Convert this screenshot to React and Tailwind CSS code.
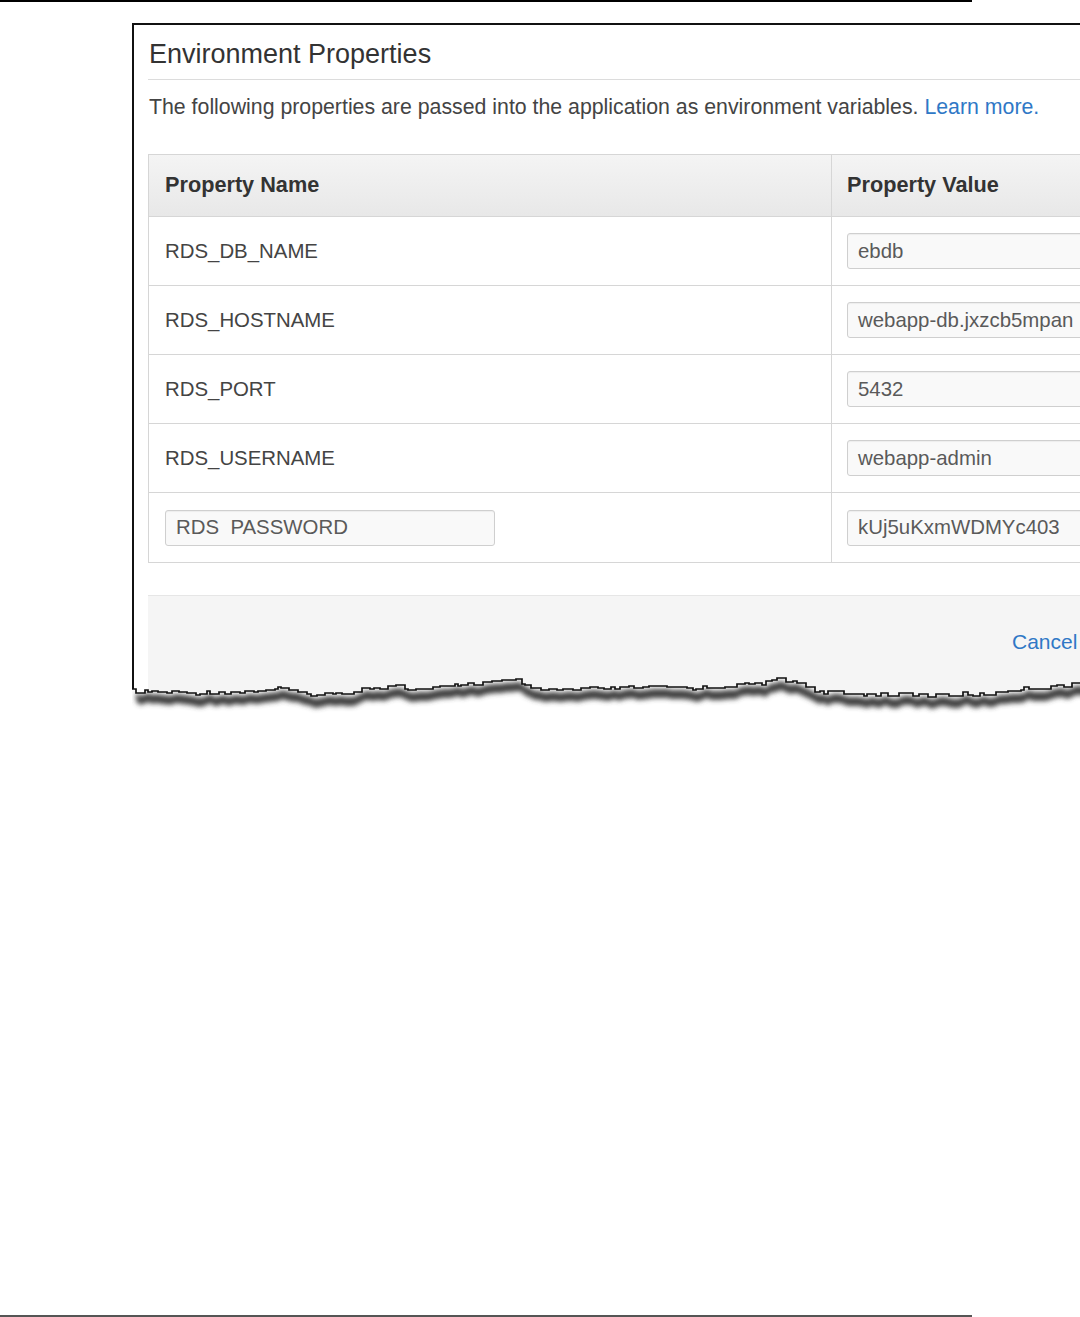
import React from "react";

const rows = [
  { name: "RDS_DB_NAME", value: "ebdb" },
  { name: "RDS_HOSTNAME", value: "webapp-db.jxzcb5mpan" },
  { name: "RDS_PORT", value: "5432" },
  { name: "RDS_USERNAME", value: "webapp-admin" },
  { name: "RDS_PASSWORD", value: "kUj5uKxmWDMYc403", editable: true },
];

// rough outline of the torn bottom edge, page coordinates
const anchors = [
  [132, 689], [180, 691], [240, 690], [285, 686], [300, 692], [345, 692], [360, 686],
  [400, 684], [410, 688], [440, 686], [465, 682], [490, 680], [520, 679], [528, 688],
  [560, 688], [600, 687], [640, 685], [700, 686], [740, 683], [770, 680], [777, 676],
  [800, 681], [822, 691], [860, 692], [920, 693], [990, 692], [1010, 688], [1050, 684],
  [1095, 681],
];

function baseY(x) {
  for (let i = 0; i < anchors.length - 1; i++) {
    const [x0, y0] = anchors[i];
    const [x1, y1] = anchors[i + 1];
    if (x >= x0 && x <= x1) return y0 + ((y1 - y0) * (x - x0)) / (x1 - x0);
  }
  return anchors[anchors.length - 1][1];
}

function hash(n) {
  const s = Math.sin(n * 12.9898) * 43758.5453;
  return s - Math.floor(s);
}

const OX = 132;
const OY = 660;

function tornPoints() {
  const pts = [];
  let x = 132;
  let i = 0;
  while (x <= 1095) {
    const y = Math.round(baseY(x) + (hash(i) - 0.5) * 4);
    pts.push([x - OX, y - OY]);
    x += 3 + Math.floor(hash(i + 100) * 7);
    i++;
  }
  return pts;
}

const pts = tornPoints();
const edge = pts
  .map(([x, y], i) => (i === 0 ? `M${x} ${y}` : `H${x} V${y}`))
  .join(" ");
const below = `${edge} H970 V70 H0 Z`;
const shadowTop = pts.map(([x, y], i) => `${i === 0 ? "M" : "L"}${x + 4} ${y + 3}`).join(" ");
const shadowBottom = pts
  .slice()
  .reverse()
  .map(([x, y]) => `L${x + 4} ${y + 12}`)
  .join(" ");
const shadow = `${shadowTop} ${shadowBottom} Z`;

function TornEdge() {
  return (
    <svg
      className="absolute left-[-2px] top-[637px]"
      width="970"
      height="70"
      viewBox="0 0 970 70"
    >
      <defs>
        <clipPath id="below">
          <path d={below} />
        </clipPath>
        <filter id="blur" x="-5%" y="-50%" width="110%" height="200%">
          <feGaussianBlur stdDeviation="2.4" />
        </filter>
      </defs>
      <path d={below} fill="#ffffff" />
      <g clipPath="url(#below)">
        <path d={shadow} fill="#3f3f3f" filter="url(#blur)" />
      </g>
      <path d={edge} fill="none" stroke="#111" strokeWidth="1.7" />
    </svg>
  );
}

function Field({ children, className = "" }) {
  return (
    <div
      className={`flex h-[36px] shrink-0 items-center rounded-[3px] border border-[#cfcfcf] bg-[#f9f9f9] px-[10px] text-[20.4px] text-[#5a5a5a] shadow-[inset_0_1px_1px_rgba(0,0,0,0.05)] whitespace-nowrap overflow-hidden ${className}`}
    >
      {children}
    </div>
  );
}

export default function App() {
  return (
    <div
      className="flex h-[1317px] w-[1080px] flex-col overflow-hidden bg-white"
      style={{ fontFamily: '"Liberation Sans", Arial, sans-serif' }}
    >
      <div className="h-[2px] w-[972px] shrink-0 bg-black" />

      <div className="relative ml-[132px] mt-[21px] h-[690px] w-[1000px] shrink-0 border-l-2 border-t-2 border-[#111] bg-white">
        <div className="px-[14px]">
          <div className="border-b border-[#dcdcdc] pb-[10px] pt-[14px]">
            <h1 className="pl-[1px] text-[27px] leading-[30px] text-[#333]">Environment Properties</h1>
          </div>
          <p className="mt-[15px] whitespace-nowrap pl-[1px] text-[21.3px] leading-[24px] text-[#444]">
            The following properties are passed into the application as environment variables.{" "}
            <span className="text-[#2f78c6]">Learn more.</span>
          </p>

          <div className="mt-[35px] border border-[#d6d6d6]">
            <div className="flex h-[62px] border-b border-[#d6d6d6] bg-gradient-to-b from-[#f4f4f4] to-[#e8e8e8] text-[21.7px] font-bold text-[#333]">
              <div className="flex w-[683px] shrink-0 items-center border-r border-[#d6d6d6] pl-[16px]">Property Name</div>
              <div className="flex flex-1 items-center pl-[15px]">Property Value</div>
            </div>
            {rows.map((r, i) => (
              <div
                key={r.name}
                className={`flex h-[69px] ${i < rows.length - 1 ? "border-b border-[#d6d6d6]" : ""}`}
              >
                <div className="flex w-[683px] shrink-0 items-center border-r border-[#d6d6d6] pl-[16px] text-[20.4px] text-[#444]">
                  {r.editable ? (
                    <Field className="w-[330px]">
                      RDS<span className="text-transparent">_</span>PASSWORD
                    </Field>
                  ) : (
                    r.name
                  )}
                </div>
                <div className="flex min-w-0 flex-1 items-center pl-[15px]">
                  <Field className="w-[320px]">{r.value}</Field>
                </div>
              </div>
            ))}
          </div>

          <div className="mt-[32px] h-[120px] border-t border-[#e6e6e6] bg-[#f5f5f5] pl-[864px] pt-[30px] text-[21px] text-[#2f78c6]">
            Cancel
          </div>
        </div>
        <TornEdge />
      </div>

      <div className="mt-auto h-[2px] w-[972px] shrink-0 bg-[#555]" />
    </div>
  );
}
